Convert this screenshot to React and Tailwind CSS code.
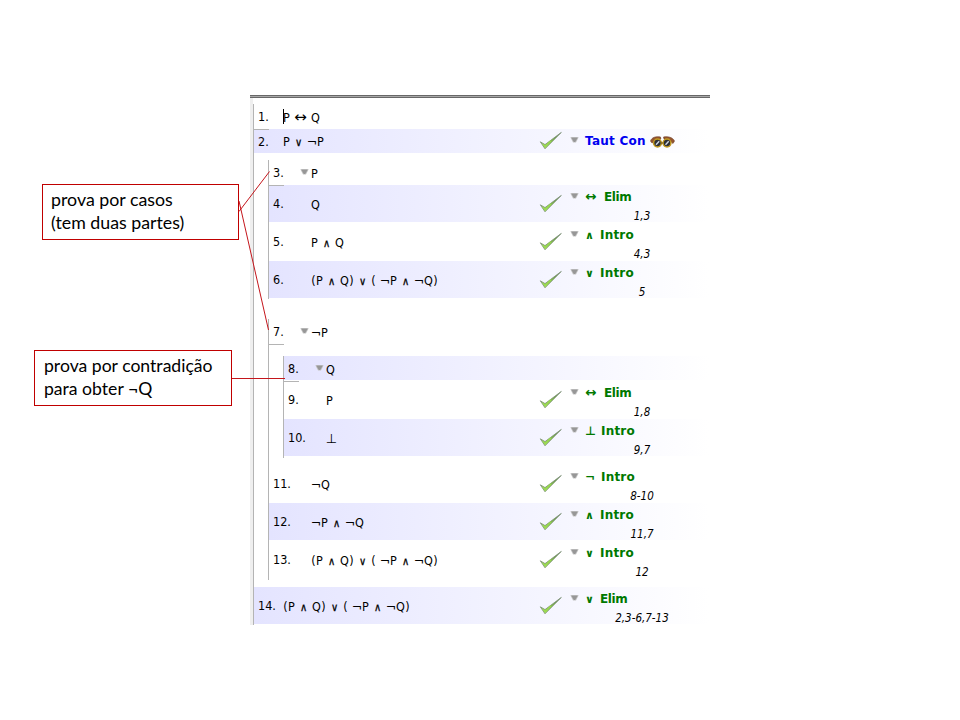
const TOKEN_WIDTH = {
  "P": "w-[7px]",
  "Q": "w-[9px]",
  "(": "w-[5px]",
  ")": "w-[5px]",
  " ": "w-[4px]",
  "∧": "w-[9px]",
  "∨": "w-[9px]",
  "¬": "w-[10px]",
  "↔": "w-[13px]",
  "⊥": "w-[11px]",
};

const TOKEN_STYLE = {
  "∧": "text-[11px] [-webkit-text-stroke:0.25px_black]",
  "∨": "text-[11px] [-webkit-text-stroke:0.25px_black]",
  "↔": "font-['DejaVu_Sans',sans-serif] text-[15px] leading-[12px]",
  "¬": "font-['DejaVu_Sans',sans-serif]",
  "⊥": "font-['DejaVu_Sans',sans-serif] text-[13px]",
};

function Formula({ text }) {
  return (
    <span className="flex items-baseline whitespace-pre text-[12.5px] leading-[16px]">
      {[...text].map((c, i) => (
        <span key={i} className={`${TOKEN_WIDTH[c]} flex justify-center ${TOKEN_STYLE[c] || ""}`}>
          {c}
        </span>
      ))}
    </span>
  );
}

function Check() {
  return (
    <svg width="24" height="20" viewBox="0 0 24 20" className="shrink-0">
      <defs>
        <linearGradient id="leaf" x1="0" y1="1" x2="1" y2="0">
          <stop offset="0.2" stopColor="#a4e356" />
          <stop offset="0.5" stopColor="#85c14a" />
          <stop offset="1" stopColor="#3f6b32" />
        </linearGradient>
      </defs>
      <path d="M1.3 10.8 L6 13.6 L22.3 1.4 L6 17.8 Z" fill="url(#leaf)" stroke="#7c8f76" strokeWidth="0.8" strokeLinejoin="round" />
      <path d="M4 13.3 L6 15.4 L12 9.8" fill="none" stroke="#98d850" strokeWidth="1.2" />
    </svg>
  );
}

function Arrow() {
  return (
    <svg width="9" height="6" viewBox="0 0 9 6" className="shrink-0">
      <path d="M0.3 0.3H8.7L6 5.5H3Z" fill="#c4c4c4" />
      <path d="M1.2 0.5H7.8L5.2 5H3.8Z" fill="#979797" />
    </svg>
  );
}

function Goggles() {
  return (
    <svg width="25" height="12" viewBox="0 0 25 12" className="ml-[4px] mt-[3px]">
      <path d="M0.500 5C1.500 1.500 6 0 10.500 1L10.800 3L6 4.500L2 7Z" fill="#96552f" stroke="#6b3b22" strokeWidth="0.6" />
      <path d="M13.500 1C18 0 23 1.500 24.500 5L23 7.500L19.500 4.500L14 3Z" fill="#96552f" stroke="#6b3b22" strokeWidth="0.6" />
      <circle cx="7.500" cy="7" r="3.900" fill="#2c2f36" stroke="#c29a20" strokeWidth="1.500" />
      <circle cx="17" cy="7" r="3.900" fill="#2c2f36" stroke="#c29a20" strokeWidth="1.500" />
      <path d="M6 8.700L9.200 5.200M15.500 8.700L18.700 5.200" stroke="#cdd4e0" strokeWidth="1.400" />
      <path d="M11 7H13.500" stroke="#7a5c12" strokeWidth="1.200" />
    </svg>
  );
}

function Rule({ sym, gap, name, cite }) {
  return (
    <div className="flex h-full w-[170px] shrink-0">
      <div className={cite ? "pt-[9px]" : "pt-[2px]"}>
        <Check />
      </div>
      <div className="ml-[7px] pt-[8px]">
        <Arrow />
      </div>
      <div className="ml-[6px] flex-1 pt-[4px] font-['DejaVu_Sans',sans-serif]">
        {cite ? (
          <>
            <div className="flex h-[16px] items-baseline whitespace-pre text-[12px] font-bold leading-[16px] text-[#007800]">
              <span className={`${gap} ${sym === "∧" || sym === "∨" ? "text-[11px]" : ""} ${sym === "↔" ? "text-[13.5px] leading-[14px]" : ""}`}>{sym}</span>
              <span className={name === "Elim" ? "tracking-[-0.4px]" : "tracking-[0.2px]"}>{name}</span>
            </div>
            <div className="mt-[3px] w-[114px] text-center font-['DejaVu_Sans_Condensed','DejaVu_Sans',sans-serif] text-[11.5px] italic leading-[16px]">
              {cite}
            </div>
          </>
        ) : (
          <div className="flex h-[16px] text-[12px] font-bold leading-[16px] tracking-[0.25px] text-[#0000f0]">
            {name}
            <Goggles />
          </div>
        )}
      </div>
    </div>
  );
}

function Row({ n, f, open, pad, shade, h = "h-[38px]", rule }) {
  const inner = h === "h-[38px]" ? "h-[37px]" : "h-[24px]";
  return (
    <div className={h}>
      <div className={`flex ${inner} ${shade ? "bg-linear-to-r from-[#e4e4ff] to-white" : ""}`}>
        <div className="flex flex-1 items-center">
          <div className={`${pad} flex items-center justify-between pl-[4px] pr-[2px]`}>
            <span className="pt-px text-[12.5px] leading-[16px]">{n}.</span>
            {open && <Arrow />}
          </div>
          <div className="pt-[3px]">
            <Formula text={f} />
          </div>
        </div>
        {rule && <Rule {...rule} />}
      </div>
    </div>
  );
}

const elim = { sym: "↔", gap: "w-[19px]", name: "Elim" };
const and = { sym: "∧", gap: "w-[15px]", name: "Intro" };
const or = { sym: "∨", gap: "w-[15px]", name: "Intro" };

function Callout({ place, children }) {
  return (
    <div className={`absolute ${place} border border-[#c00000] bg-white pt-[3px] font-[Lato,sans-serif] leading-[23px]`}>
      {children}
    </div>
  );
}

export default function App() {
  return (
    <div className="relative h-[720px] w-[960px] overflow-hidden bg-white pl-[250px] pt-[95px] font-['DejaVu_Sans_Condensed','DejaVu_Sans',sans-serif] text-black">
      <div className="w-[460px]">
        <div className="h-[3px] border-y border-[#686868] bg-[#a8a8a8]" />
        <div className="flex h-[527px] border-l-[3px] border-[#efefef] pt-[6px]">
          <div className="w-[456px] border-l border-[#b4b4b4]">
            <Row n={1} f="P ↔ Q" pad="w-[29px]" h="h-[25px]" />
            <div className="relative"><div className="absolute -top-[20px] left-[29px] h-[15px] w-px bg-black" /></div>
            <Row n={2} f="P ∨ ¬P" pad="w-[29px]" h="h-[24px]" shade rule={{ name: "Taut Con" }} />
            <div className="-mt-[24px] mb-[30px] h-px w-[15px] bg-[#b4b4b4]" />

            <div className="ml-[14px] h-[139px] border-l border-[#b4b4b4]">
              <Row n={3} f="P" open pad="w-[42px]" h="h-[25px]" />
              <Row n={4} f="Q" pad="w-[42px]" shade rule={{ ...elim, cite: "1,3" }} />
              <Row n={5} f="P ∧ Q" pad="w-[42px]" rule={{ ...and, cite: "4,3" }} />
              <Row n={6} f="(P ∧ Q) ∨ ( ¬P ∧ ¬Q)" pad="w-[42px]" shade rule={{ ...or, cite: "5" }} />
              <div className="-mt-[114px] h-px w-[15px] bg-[#b4b4b4]" />
            </div>

            <div className="ml-[14px] mt-[20px] h-[261px] border-l border-[#b4b4b4]">
              <Row n={7} f="¬P" open pad="w-[42px]" h="h-[25px]" />
              <div className="h-px w-[15px] bg-[#b4b4b4]" />
              <div className="ml-[14px] mt-[11px] h-[102px] border-l border-[#b4b4b4]">
                <Row n={8} f="Q" open pad="w-[42px]" h="h-[25px]" shade />
                <div className="-mb-px h-px w-[15px] bg-[#b4b4b4]" />
                <Row n={9} f="P" pad="w-[42px]" rule={{ ...elim, cite: "1,8" }} />
                <Row n={10} f="⊥" pad="w-[42px]" shade rule={{ sym: "⊥", gap: "w-[16px]", name: "Intro", cite: "9,7" }} />
              </div>
              <div className="pt-[7px]">
                <Row n={11} f="¬Q" pad="w-[42px]" rule={{ sym: "¬", gap: "w-[16px]", name: "Intro", cite: "8-10" }} />
                <Row n={12} f="¬P ∧ ¬Q" pad="w-[42px]" shade rule={{ ...and, cite: "11,7" }} />
                <Row n={13} f="(P ∧ Q) ∨ ( ¬P ∧ ¬Q)" pad="w-[42px]" rule={{ ...or, cite: "12" }} />
              </div>
            </div>

            <div className="pt-[7px]">
              <Row n={14} f="(P ∧ Q) ∨ ( ¬P ∧ ¬Q)" pad="w-[29px]" shade rule={{ ...or, name: "Elim", cite: "2,3-6,7-13" }} />
            </div>
          </div>
        </div>
      </div>

      <Callout place="left-[42px] top-[184px] h-[56px] w-[197px] pl-[8px] text-[17.8px]">
        prova por casos
        <br />
        (tem duas partes)
      </Callout>
      <Callout place="left-[34px] top-[350px] h-[56px] w-[198px] pl-[9px] text-[17.6px]">
        prova por contradição
        <br />
        para obter ¬Q
      </Callout>
      <svg className="pointer-events-none absolute left-0 top-0" width="960" height="720" fill="none" stroke="#c4161c">
        <path d="M239 211.500L269.500 171.500M239 201L268.500 330M232 378.500H285" />
      </svg>
    </div>
  );
}
